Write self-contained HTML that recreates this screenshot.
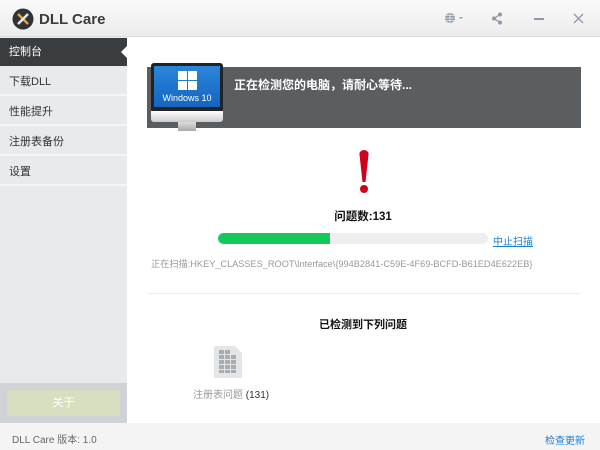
<!DOCTYPE html>
<html><head><meta charset="utf-8"><style>
*{margin:0;padding:0;box-sizing:border-box}
body{width:600px;height:450px;position:relative;overflow:hidden;background:#fff;font-family:"Liberation Sans","Noto Sans CJK SC",sans-serif;font-size:11px;color:#333}
.a{position:absolute}
#title{left:0;top:0;width:600px;height:37px;background:linear-gradient(#fafafa,#ececec);border-bottom:1px solid #ddd}
#side{left:0;top:37px;width:127px;height:386px;background:#e8eaec}
.it{position:absolute;left:0;width:127px;height:28px;line-height:28px;padding-left:9px;font-size:11px;color:#333;border-bottom:2px solid #f6f6f6}
</style></head><body>
<div id="title" class="a">
<svg class="a" style="left:12px;top:8px" width="22" height="22" viewBox="0 0 22 22"><circle cx="11" cy="11" r="10.5" fill="#2f3438"/><path d="M6 6l10 10" stroke="#f3a31b" stroke-width="2.5"/><path d="M16 6L6 16" stroke="#e8e8e8" stroke-width="2.5"/></svg>
<div class="a" style="left:39px;top:11px;font-size:15px;font-weight:bold;color:#3a3d40">DLL Care</div>
<svg class="a" style="left:444px;top:12px" width="20" height="12"><circle cx="6" cy="6" r="5" fill="#8e9aa8"/><path d="M1 6h10M6 1v10M2 3.5h8M2 8.5h8" stroke="#eee" stroke-width=".8"/><path d="M15 5h4l-2 2z" fill="#8e9aa8"/></svg>
<svg class="a" style="left:491px;top:12px" width="12" height="13"><circle cx="9" cy="2.5" r="2" fill="#8e9aa8"/><circle cx="3" cy="6.5" r="2" fill="#8e9aa8"/><circle cx="9" cy="10.5" r="2" fill="#8e9aa8"/><path d="M9 2.5L3 6.5 9 10.5" stroke="#8e9aa8" stroke-width="1.3" fill="none"/></svg>
<div class="a" style="left:534px;top:18px;width:10px;height:1.5px;background:#8e9aa8"></div>
<svg class="a" style="left:573px;top:13px" width="11" height="11"><path d="M1 1l9 9M10 1l-9 9" stroke="#8e9aa8" stroke-width="1.3"/></svg>
</div>
<div id="side" class="a">
<div class="it" style="top:1px;background:#3a3d40;color:#fff;border-color:#3a3d40">控制台</div>
<div class="a" style="left:121px;top:9px;width:0;height:0;border-top:6px solid transparent;border-bottom:6px solid transparent;border-right:6px solid #fff"></div>
<div class="it" style="top:31px">下载DLL</div>
<div class="it" style="top:61px">性能提升</div>
<div class="it" style="top:91px">注册表备份</div>
<div class="it" style="top:121px">设置</div>
<div class="a" style="left:0;top:346px;width:127px;height:40px;background:#d0d3d6"></div>
<div class="a" style="left:7px;top:353px;width:113px;height:26px;background:#d8dfc0;color:#fff;text-align:center;line-height:26px">关于</div>
</div>
<div class="a" style="left:147px;top:67px;width:434px;height:61px;background:#5a5e61"></div>
<div class="a" style="left:151px;top:63px;width:72px;height:49px;background:#1f2326;border-radius:3px"></div>
<div class="a" style="left:154px;top:66px;width:66px;height:41px;background:linear-gradient(#2a86da,#1565c0)"></div>
<svg class="a" style="left:178px;top:71px" width="19" height="19"><path d="M0 0h9v9H0zM10 0h9v9h-9zM0 10h9v9H0zM10 10h9v9h-9z" fill="#fff"/></svg>
<div class="a" style="left:154px;top:93px;width:66px;text-align:center;color:#fff;font-size:9px">Windows 10</div>
<div class="a" style="left:151px;top:111px;width:72px;height:11px;background:linear-gradient(#fff,#ccc);border-radius:0 0 3px 3px"></div>
<div class="a" style="left:178px;top:122px;width:18px;height:9px;background:linear-gradient(#ddd,#aaa)"></div>
<div class="a" style="left:234px;top:76px;color:#fff;font-size:12px;font-weight:bold">正在检测您的电脑，请耐心等待...</div>
<div class="a" style="left:359px;top:150px;width:10px;height:32px;background:#d0021b;border-radius:5px 5px 2px 2px;clip-path:polygon(0 0,100% 0,65% 100%,35% 100%)"></div>
<div class="a" style="left:360px;top:185px;width:8px;height:8px;background:#d0021b;border-radius:50%"></div>
<div class="a" style="left:300px;top:208px;width:126px;text-align:center;font-weight:bold;font-size:11.5px;color:#111">问题数:131</div>
<div class="a" style="left:218px;top:233px;width:270px;height:11px;background:#eee;border-radius:6px;overflow:hidden"><div style="width:112px;height:11px;background:#13c95c;border-radius:6px 0 0 6px"></div></div>
<div class="a" style="left:493px;top:233px;color:#1a7fd4;text-decoration:underline;font-size:10px">中止扫描</div>
<div class="a" style="left:151px;top:256px;color:#999;font-size:9.2px">正在扫描:HKEY_CLASSES_ROOT\Interface\{994B2841-C59E-4F69-BCFD-B61ED4E622EB}</div>
<div class="a" style="left:147px;top:293px;width:434px;height:1px;background:#eee"></div>
<div class="a" style="left:280px;top:316px;width:166px;text-align:center;font-weight:bold;color:#111">已检测到下列问题</div>
<div class="a" style="left:214px;top:346px;width:28px;height:32px;background:#e3e5e7;border-radius:2px;clip-path:polygon(0 0,75% 0,100% 22%,100% 100%,0 100%)"></div>
<svg class="a" style="left:219px;top:350px" width="18" height="24"><g fill="#a8adb2"><rect x="0" y="0" width="5" height="4"/><rect x="6" y="0" width="5" height="4"/><rect x="0" y="5" width="5" height="4"/><rect x="6" y="5" width="5" height="4"/><rect x="12" y="5" width="5" height="4"/><rect x="0" y="10" width="5" height="4"/><rect x="6" y="10" width="5" height="4"/><rect x="12" y="10" width="5" height="4"/><rect x="0" y="15" width="5" height="4"/><rect x="6" y="15" width="5" height="4"/><rect x="12" y="15" width="5" height="4"/><rect x="0" y="20" width="5" height="3"/><rect x="6" y="20" width="5" height="3"/><rect x="12" y="20" width="5" height="3"/></g></svg>
<div class="a" style="left:193px;top:386px;font-size:10px;color:#999">注册表问题 <span style="color:#333">(131)</span></div>
<div class="a" style="left:0;top:423px;width:600px;height:27px;background:#f4f4f4"></div>
<div class="a" style="left:12px;top:431px;font-size:10px;color:#666">DLL Care 版本: 1.0</div>
<div class="a" style="left:545px;top:432px;font-size:10px;color:#1a7fd4">检查更新</div>
</body></html>
